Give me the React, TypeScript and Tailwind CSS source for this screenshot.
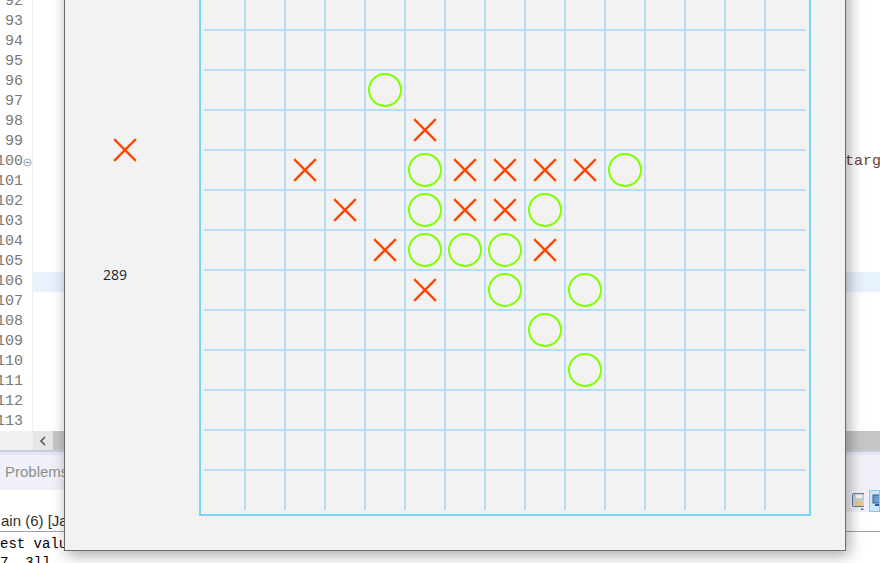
const LINES = Array.from({ length: 22 }, (_, i) => 92 + i);

// board pieces as [column, row] cells
const CROSSES: [number, number][] = [
  [5, 3],
  [2, 4], [6, 4], [7, 4], [8, 4], [9, 4],
  [3, 5], [6, 5], [7, 5],
  [4, 6], [8, 6],
  [5, 7],
];
const RINGS: [number, number][] = [
  [4, 2],
  [5, 4], [10, 4],
  [5, 5], [8, 5],
  [5, 6], [6, 6], [7, 6],
  [7, 7], [9, 7],
  [8, 8],
  [9, 9],
];

const Cross = ({ x, y }: { x: number; y: number }) => (
  <g stroke="#ff4500" strokeWidth={2.4} strokeLinecap="square">
    <line x1={x - 10} y1={y - 10} x2={x + 10} y2={y + 10} />
    <line x1={x + 10} y1={y - 10} x2={x - 10} y2={y + 10} />
  </g>
);

const Board = () => {
  const cx = (c: number) => 26 + 40 * c;
  const cy = (r: number) => 39 + 40 * r;
  return (
    <svg width={612} height={546} className="shrink-0 block">
      {Array.from({ length: 14 }, (_, k) => (
        <line key={`v${k}`} x1={46 + 40 * k} y1={0} x2={46 + 40 * k} y2={539} stroke="#b6def6" strokeWidth={2} />
      ))}
      {Array.from({ length: 13 }, (_, k) => (
        <line key={`h${k}`} x1={5} y1={19 + 40 * k} x2={607} y2={19 + 40 * k} stroke="#b6def6" strokeWidth={2} />
      ))}
      <rect x={1} y={-10} width={610} height={554} fill="none" stroke="#78d4f8" strokeWidth={2} />
      {CROSSES.map(([c, r]) => (
        <Cross key={`x${c}-${r}`} x={cx(c)} y={cy(r)} />
      ))}
      {RINGS.map(([c, r]) => (
        <circle key={`o${c}-${r}`} cx={cx(c)} cy={cy(r)} r={16} fill="none" stroke="#7fff00" strokeWidth={2} />
      ))}
    </svg>
  );
};

const GameWindow = () => (
  <div className="absolute left-[64px] top-[-30px] w-[782px] h-[581px] border border-[#6b6b6b] bg-[#f2f2f2] shadow-[3px_4px_14px_rgba(0,0,0,0.35)] flex">
    {/* side panel */}
    <div className="w-[134px] shrink-0 flex flex-col">
      <svg width={24} height={24} className="ml-[48px] mt-[167px]">
        <Cross x={12} y={12} />
      </svg>
      <span className="ml-[38px] mt-[105px] text-[14px] leading-[16px] text-[#222] font-['Open_Sans',sans-serif]">289</span>
    </div>
    <Board />
  </div>
);

export default function App() {
  return (
    <div className="relative w-[880px] h-[563px] overflow-hidden bg-white font-['Liberation_Sans',sans-serif]">
      {/* editor */}
      <div className="h-[431px] overflow-hidden">
        <div className="mt-[-8px]">
          {LINES.map((n) => (
            <div key={n} className="flex h-[20px]">
              <div className="w-[23px] shrink-0 flex justify-end items-center font-['Liberation_Mono',monospace] text-[15px] leading-[20px] text-[#787878]">
                {n}
              </div>
              <div className="w-[9px] shrink-0 flex items-center">
                {n === 100 && (
                  <svg width={9} height={9}>
                    <circle cx={4.5} cy={4.5} r={3.6} fill="#f4f6f9" stroke="#9aa9bb" strokeWidth={1} />
                    <line x1={2.5} y1={4.5} x2={6.5} y2={4.5} stroke="#7d8ea3" strokeWidth={1} />
                  </svg>
                )}
              </div>
              <div className="w-px shrink-0 bg-[#efefef]" />
              <div className={`flex-1 flex items-center pl-[812px] font-['Liberation_Mono',monospace] text-[15px] whitespace-nowrap ${n === 106 ? "bg-[#e8f2fe]" : ""}`}>
                {n === 100 && <span className="text-[#6a3e3e]">target</span>}
              </div>
            </div>
          ))}
        </div>
      </div>

      {/* horizontal scrollbar */}
      <div className="flex h-[19px]">
        <div className="w-[33px] bg-[#f0f0f0]" />
        <div className="w-[20px] bg-[#e6e6e6] flex items-center justify-center">
          <svg width={8} height={10}>
            <path d="M6 1 L2 5 L6 9" fill="none" stroke="#555" strokeWidth={1.6} />
          </svg>
        </div>
        <div className="flex-1 bg-[#c6c6c6]" />
      </div>
      <div className="h-[2px] bg-[#c9cce0]" />
      <div className="h-[3px] bg-[#e4e6f4]" />

      {/* bottom view tabs */}
      <div className="h-[35px] bg-[#f0f1f8] flex items-center pl-[5px]">
        <span className="text-[15px] text-[#8e8e8e]">Problems</span>
      </div>
      <div className="h-[22px] flex">
        <div className="flex-1 bg-white" />
        <div className="w-[36px] bg-[#f0f1f8] flex items-center gap-[5px] pl-[7px]">
          <svg width={17} height={19}>
            <rect x={1.5} y={1.5} width={13} height={13} rx={1} fill="#c9d4e4" stroke="#5f7794" />
            <rect x={4} y={2} width={8} height={5} fill="#f5f5f5" stroke="#8896a8" strokeWidth={0.6} />
            <rect x={4.5} y={9} width={7} height={5} fill="#e8c87a" />
            <rect x={10} y={16.5} width={1.6} height={1.6} fill="#3b5f8a" />
            <rect x={12.5} y={16.5} width={1.6} height={1.6} fill="#3b5f8a" />
            <rect x={15} y={16.5} width={1.6} height={1.6} fill="#3b5f8a" />
          </svg>
          <div className="w-[14px] h-[22px] bg-[#cde6fb] border border-[#8cc8f5] overflow-hidden">
            <svg width={14} height={20}>
              <rect x={3} y={4} width={10} height={8} fill="#6a9bd1" stroke="#2f5e96" />
              <rect x={5} y={13} width={6} height={2} fill="#2f5e96" />
            </svg>
          </div>
        </div>
      </div>
      <div className="h-[20px] border-b border-[#a3a3a3] flex items-center pl-[1px]">
        <span className="text-[15px] text-[#303030] whitespace-nowrap">ain (6) [Java Application]</span>
      </div>

      {/* console */}
      <div className="font-['Liberation_Mono',monospace] text-[14px] leading-[19px] text-black whitespace-pre pt-[3px]">
        <div>est value</div>
        <div>7, 3]]</div>
      </div>

      <GameWindow />
    </div>
  );
}
